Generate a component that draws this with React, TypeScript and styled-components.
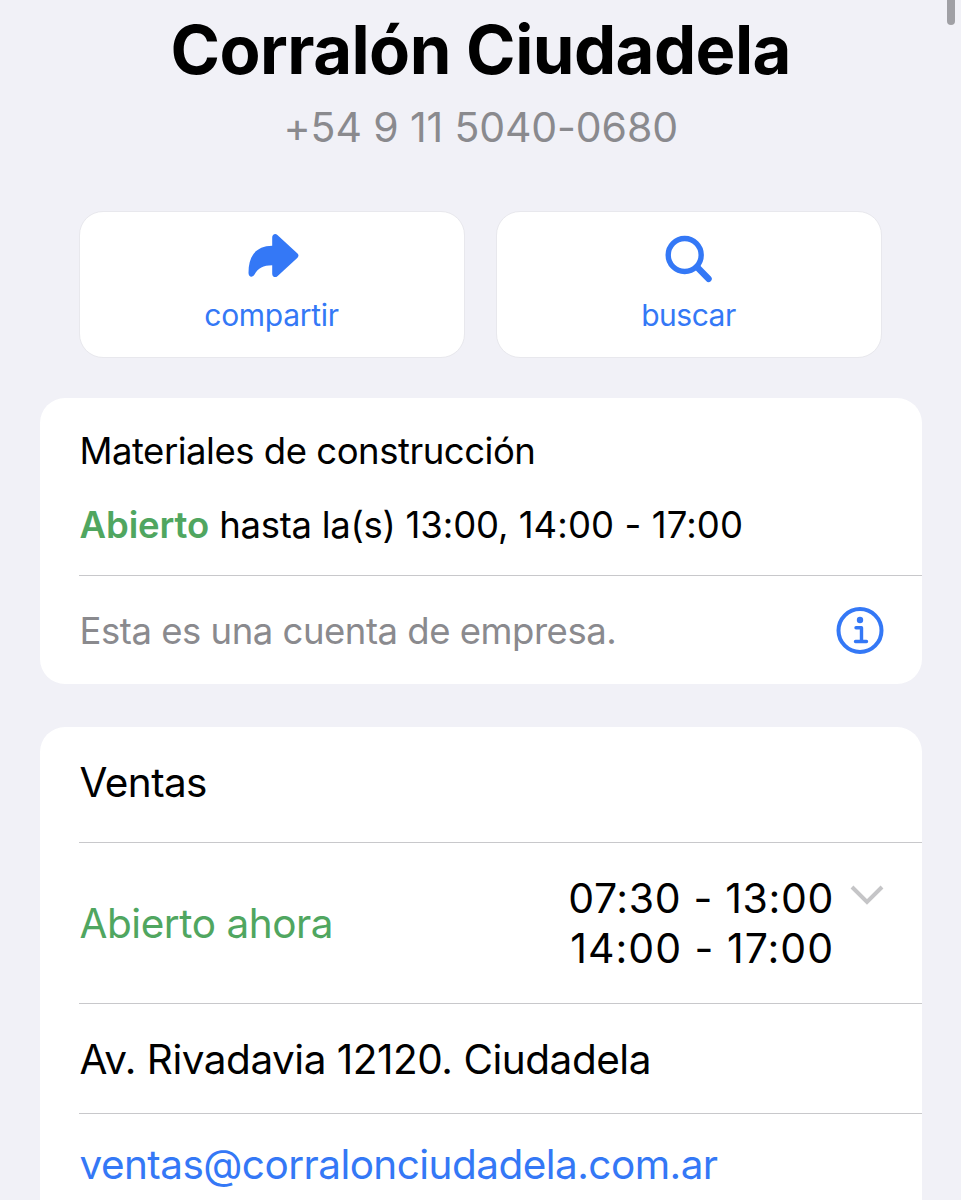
import React from "react";
import styled, { createGlobalStyle } from "styled-components";

const Global = createGlobalStyle`
  * { box-sizing: border-box; }
  html, body { margin: 0; height: 1200px; overflow: hidden; background: #f1f1f7; }
`;

const Screen = styled.main`
  position: relative;
  height: 1200px;
  overflow: hidden;
  padding: 12px 39px 0 39.5px;
  background: #f1f1f7;
  color: #000;
  font-family: Inter, "Liberation Sans", sans-serif;
`;

const ScrollThumb = styled.div`
  position: absolute;
  top: 0;
  right: 6px;
  width: 8px;
  height: 25px;
  border-radius: 0 0 4px 4px;
  background: #a0a0a5;
`;

const Header = styled.header`
  display: flex;
  flex-direction: column;
  align-items: center;
`;

const Title = styled.h1`
  margin: 0;
  font-size: 67px;
  line-height: 76px;
  font-weight: 700;
  letter-spacing: -0.55px;
  white-space: nowrap;
`;

const Text = styled.span<{ $size: number; $spacing?: number; $line?: number; $weight?: number; $color?: string }>`
  font-size: ${(p) => p.$size}px;
  line-height: ${(p) => p.$line ?? 50}px;
  letter-spacing: ${(p) => p.$spacing ?? 0}px;
  font-weight: ${(p) => p.$weight ?? 400};
  color: ${(p) => p.$color ?? "inherit"};
  white-space: nowrap;
`;

const Phone = styled(Text)`
  margin-top: 7px;
`;

const RowText = styled(Text)`
  padding-top: 2px;
`;

const Actions = styled.div`
  display: grid;
  grid-template-columns: 386px 386px;
  gap: 31px;
  margin: 52px 39.5px 0 39.5px;
`;

const Action = styled.button`
  display: flex;
  flex-direction: column;
  align-items: center;
  height: 147px;
  padding: 19px 1px 0 0;
  border: 1px solid #e8e8ed;
  border-radius: 24px;
  background: #fff;
  color: #3478f6;
  font-family: inherit;
`;

const Card = styled.section<{ $top: number }>`
  margin-top: ${(p) => p.$top}px;
  border-radius: 25px;
  background: #fff;
`;

const Row = styled.div<{ $height: number; $line?: boolean; $raise?: number }>`
  display: flex;
  align-items: center;
  justify-content: space-between;
  height: ${(p) => p.$height}px;
  margin-left: 39.5px;
  padding: 0 38.5px ${(p) => p.$raise ?? 0}px 0.5px;
  border-top: ${(p) => (p.$line ? "1px solid #c8c8cb" : "0")};
`;

const Summary = styled.div`
  display: flex;
  flex-direction: column;
  height: 177px;
  padding: 28px 39px 0 40px;
  gap: 24px;
`;

const Hours = styled.div`
  display: flex;
  gap: 15.5px;
`;

const Times = styled.div`
  display: flex;
  flex-direction: column;
  align-items: flex-end;
`;

const green = "#50a660";
const blue = "#3478f6";
const gray = "#8a8a8e";

export default function App() {
  return (
    <Screen>
      <Global />
      <ScrollThumb />
      <Header>
        <Title>Corralón Ciudadela</Title>
        <Phone $size={41} $line={64} $spacing={-0.12} $color={gray}>+54 9 11 5040-0680</Phone>
      </Header>
      <Actions>
        <Action>
          <svg width="54" height="54" viewBox="0 0 54 54" fill="currentColor">
            <path d="M27.200 6.500c0-3 3-4.500 5.200-2.500L52.500 22.500c1.300 1.200 1.300 3 0 4.200L32.400 45.200c-2.200 2-5.200.5-5.200-2.500v-8.500c-9 .2-14 2.500-17.700 9.300-2 3.500-6 2.500-6-1.500C3.500 25 10.500 15.300 27.200 14.800z" />
          </svg>
          <Text $size={30} $line={60} $spacing={-0.3}>compartir</Text>
        </Action>
        <Action>
          <svg width="54" height="54" viewBox="0 0 54 54" fill="none" stroke="currentColor" strokeLinecap="round">
            <circle cx="22.700" cy="24" r="16.500" strokeWidth="5.400" />
            <path d="M35 36l11.500 11.800" strokeWidth="6.500" />
          </svg>
          <Text $size={30} $line={60} $spacing={-0.5}>buscar</Text>
        </Action>
      </Actions>
      <Card $top={40}>
        <Summary>
          <Text $size={36.5} $spacing={-0.48}>Materiales de construcción</Text>
          <Text $size={36.5} $spacing={-0.28}>
            <Text $size={36.5} $spacing={-0.1} $weight={600} $color={green}>Abierto</Text> hasta la(s){" "}
            <Text $size={36.5} $spacing={-0.1}>13:00, </Text>
            <Text $size={36.5} $spacing={0.1}>14:00 - 17:00</Text>
          </Text>
        </Summary>
        <Row $height={109} $line>
          <RowText $size={36.5} $spacing={-0.48} $color={gray}>Esta es una cuenta de empresa.</RowText>
          <svg width="48" height="48" viewBox="0 0 48 48" fill="none" stroke={blue} strokeWidth="4">
            <circle cx="24" cy="24.500" r="21.500" />
            <circle cx="24" cy="14" r="3.200" fill={blue} stroke="none" />
            <path d="M20 21.800h5.500V35.500M19.500 35.500h11" strokeWidth="3.400" strokeLinecap="round" strokeLinejoin="round" />
          </svg>
        </Row>
      </Card>
      <Card $top={43}>
        <Row $height={115} $raise={3}><Text $size={40.5} $spacing={-0.6}>Ventas</Text></Row>
        <Row $height={161} $line>
          <RowText $size={40.5} $spacing={-0.46} $color={green}>Abierto ahora</RowText>
          <Hours>
            <Times>
              <Text $size={41} $spacing={0.65}>07:30 - 13:00</Text>
              <Text $size={41} $spacing={1}>14:00 - 17:00</Text>
            </Times>
            <svg width="34" height="50" viewBox="0 0 34 50" fill="none" stroke="#c5c5c7" strokeWidth="4">
              <path d="M2 14l15 15 15-15" />
            </svg>
          </Hours>
        </Row>
        <Row $height={110} $line><RowText $size={40.5} $spacing={-0.48}>Av. Rivadavia 12120. Ciudadela</RowText></Row>
        <Row $height={110} $line $raise={8}><Text $size={40.5} $spacing={-0.55} $color={blue}>ventas@corralonciudadela.com.ar</Text></Row>
      </Card>
    </Screen>
  );
}
